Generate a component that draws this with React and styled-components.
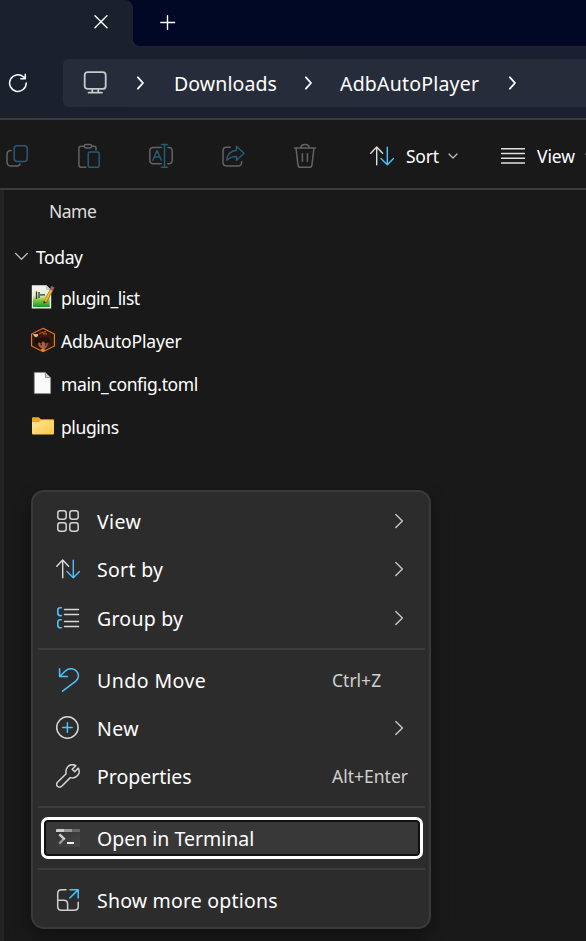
import React from "react";
import styled, { createGlobalStyle } from "styled-components";

const GlobalStyle = createGlobalStyle`
  * { box-sizing: border-box; }
  html, body { margin: 0; background: #191919; overflow: hidden; }
  body { font-family: "Noto Sans", "Open Sans", sans-serif; color: #fff; }
`;

const BLUE = "#4cc2ff";
const DIM = "#636363";
const DIM_BLUE = "#275a75";

const Window = styled.div`
  position: relative;
  display: flex;
  flex-direction: column;
  width: 586px;
  height: 941px;
  overflow: hidden;
  background: #191919;
`;

const TitleBar = styled.div`
  display: flex;
  height: 46px;
  background: #000826;
`;

const Tab = styled.div`
  position: relative;
  width: 133px;
  height: 46px;
  padding: 15px 0 0 94px;
  background: #1b202d;
  border-top-right-radius: 8px;
  &::after {
    content: "";
    position: absolute;
    left: 133px;
    bottom: 0;
    width: 6px;
    height: 6px;
    background: radial-gradient(circle at 100% 0, transparent 5.5px, #1b202d 6px);
  }
`;

const NewTab = styled.div`
  padding: 15px 0 0 27px;
`;

const NavBar = styled.div`
  display: flex;
  align-items: center;
  height: 72px;
  padding: 2px 0 0 8px;
  background: linear-gradient(90deg, #1b202d, #1b1f31);
`;

const AddressBar = styled.div`
  display: flex;
  align-items: center;
  flex: 1;
  height: 48px;
  margin-left: 36px;
  padding-left: 20px;
  background: #272c3a;
  border-radius: 6px 0 0 6px;
`;

const Icon = styled.svg`
  display: block;
  flex: none;
  fill: none;
  stroke: ${(p) => p.$color || "#fff"};
  stroke-width: ${(p) => p.$weight || 1.5};
  stroke-linecap: round;
  stroke-linejoin: round;
`;

const Crumb = styled.div`
  width: ${(p) => p.$width}px;
  padding: 2px 0 0 ${(p) => p.$lead || 29}px;
  font-size: 19.5px;
  line-height: 28px;
  letter-spacing: ${(p) => p.$track || 0}px;
  white-space: nowrap;
`;

const CommandBar = styled.div`
  display: flex;
  align-items: center;
  height: 72px;
  padding: 4px 0 0 5px;
  border-top: 2px solid #3b3b3b;
  border-bottom: 2px solid #3b3b3b;
  background: #191919;
`;

const Actions = styled.div`
  display: flex;
  gap: 48px;
`;

const CommandDivider = styled.div`
  width: 2px;
  height: 48px;
  margin: 0 26px 0 27px;
  background: #2d2d2d;
`;

const Command = styled.div`
  display: flex;
  align-items: center;
  flex: none;
  width: 131px;
`;

const CommandLabel = styled.span`
  width: ${(p) => p.$width}px;
  margin-left: 12px;
  font-size: 17.5px;
  line-height: 26px;
  letter-spacing: ${(p) => p.$track || 0}px;
`;

const Content = styled.div`
  flex: 1;
  border-left: 4px solid #232323;
  font-size: 17.5px;
`;

const ColumnHeader = styled.div`
  height: 45px;
  padding: 8px 0 0 45px;
  line-height: 26px;
  color: #dedede;
  letter-spacing: -0.5px;
`;

const GroupHeader = styled.div`
  display: flex;
  align-items: center;
  gap: 8px;
  height: 42px;
  padding: 1px 0 0 11px;
  letter-spacing: -0.4px;
`;

const FileRow = styled.div`
  display: flex;
  align-items: center;
  gap: 6px;
  height: 43px;
  padding-left: 27px;
`;

const FileName = styled.span`
  padding-bottom: 2px;
  line-height: 26px;
  letter-spacing: ${(p) => p.$track || 0}px;
`;

const Menu = styled.div`
  position: absolute;
  left: 31px;
  top: 490px;
  width: 400px;
  height: 439px;
  padding: 5px 4px 0 5px;
  background: #2c2c2c;
  border: 2px solid #3a3a3a;
  border-radius: 13px;
  box-shadow: 0 8px 18px rgba(0, 0, 0, 0.32);
`;

const MenuRow = styled.div`
  display: flex;
  align-items: center;
  height: ${(p) => p.$height || 48}px;
  padding-left: 18px;
`;

const FocusRow = styled.div`
  display: flex;
  align-items: center;
  width: 382px;
  height: 42px;
  margin: 0 0 9px 3px;
  padding-left: 12px;
  background: #383838;
  border: 3px solid #fff;
  border-radius: 7px;
  box-shadow: inset 0 0 0 2px #111;
`;

const MenuLabel = styled.span`
  flex: 1;
  margin-left: 17px;
  padding-top: ${(p) => p.$drop || 1}px;
  font-size: 19.5px;
  line-height: 28px;
  letter-spacing: ${(p) => p.$track || 0}px;
  white-space: nowrap;
`;

const Shortcut = styled.span`
  width: 93px;
  padding-bottom: 1px;
  font-size: 17.5px;
  color: #cfcfcf;
`;

const Submenu = styled(Icon)`
  margin-right: 21px;
`;

const MenuDivider = styled.div`
  height: 2px;
  margin: ${(p) => p.$top}px 0 ${(p) => p.$bottom}px;
  background: #3b3b3b;
`;

const CrumbChevron = () => (
  <Icon width="8" height="14" viewBox="0 0 8 14" $weight={1.8}><path d="M.9 1.3 6 7 .9 12.7" /></Icon>
);
const DownChevron = () => (
  <Icon width="10" height="8" viewBox="0 0 10 8" $color="#b8b8b8" $weight={1.3}><path d="M1 2 5 6 9 2" /></Icon>
);
const SubChevron = () => (
  <Submenu width="10" height="16" viewBox="0 0 10 16" $color="#c8c8c8" $weight={1.4}><path d="M1.8 1.4 8.4 8 1.8 14.6" /></Submenu>
);
const SortGlyph = () => (
  <Icon width="24" height="24" viewBox="0 0 24 24" $color="#dcdcdc" $weight={1.4}>
    <path d="M6.7 20.7V3.2M.8 9.2 6.7 3.1 12.6 9.2" />
    <path stroke={BLUE} d="M17.3 3.2V20.6M11 14.6 17.3 20.8 23.5 14.6" />
  </Icon>
);

const GridGlyph = () => (
  <Icon width="24" height="24" viewBox="0 0 24 24" $color="#d4d4d4" $weight={1.5}>
    <rect x="1.8" y="1.8" width="8.4" height="8.4" rx="2.4" />
    <rect x="13.8" y="1.8" width="8.4" height="8.4" rx="2.4" />
    <rect x="1.8" y="13.8" width="8.4" height="8.4" rx="2.4" />
    <rect x="13.8" y="13.8" width="8.4" height="8.4" rx="2.4" />
  </Icon>
);
const GroupGlyph = () => (
  <Icon width="24" height="24" viewBox="0 0 24 24" $color="#d8d8d8" $weight={1.4}>
    <path stroke={BLUE} strokeWidth="1.6" d="M5.3 1.7H4.2Q1.8 1.7 1.8 4V7Q1.8 9.6 4.2 9.6H5.3M5.3 13.8H4.2Q1.8 13.8 1.8 16V19.2Q1.8 21.8 4.2 21.8H5.3" />
    <path d="M8.5 3.5H22.5M8.5 8.5H22.5M8.5 15.5H22.5M8.5 20.5H22.5" />
  </Icon>
);
const UndoGlyph = () => (
  <Icon width="24" height="24" viewBox="0 0 24 24" $color={BLUE} $weight={1.5}>
    <path d="M3.6.8V8.5H11.4M3.9 8.2 9 3.3C13.6-1 19.2.6 21.3 4.2C23.3 7.6 22.3 10.8 19.8 13.1L6.6 23.2" />
  </Icon>
);
const NewGlyph = () => (
  <Icon width="24" height="24" viewBox="0 0 24 24" $color="#d8d8d8" $weight={1.5}>
    <circle cx="11.4" cy="11.5" r="10.7" />
    <path stroke={BLUE} d="M6.6 11.5H16.2M11.4 6.7V16.3" />
  </Icon>
);
const WrenchGlyph = () => (
  <Icon width="24" height="24" viewBox="0 0 24 24" $color="#d4d4d4" $weight={1.5}>
    <path d="M19.8 1.6C16.6.1 13.4.7 11.5 3.1C9.8 5.2 9.6 7.2 10.1 9.7L1.5 18.2C.4 19.3.4 21.1 1.5 22.3C2.7 23.5 4.6 23.4 5.7 22.3L14.3 13.6C17 14.4 19.8 13.7 21.6 11.6C23.4 9.5 23.6 6.6 22.3 4.1L18.7 7.7L16.2 5.2Z" />
  </Icon>
);
const TerminalGlyph = () => (
  <Icon width="24" height="24" viewBox="0 0 24 24">
    <defs>
      <linearGradient id="term" x1="0" y1="0" x2="1" y2="1">
        <stop offset="0" stopColor="#303030" /><stop offset="1" stopColor="#484848" />
      </linearGradient>
    </defs>
    <g stroke="none">
      <path fill="url(#term)" d="M0 3H24V20Q24 21 23 21H1Q0 21 0 20Z" />
      <path fill="#ccc" d="M0 6V4Q0 3 1 3H8V6Z" />
      <path fill="#999" d="M8 3H16V6H8Z" />
      <path fill="#666" d="M16 3H23Q24 3 24 4V6H16Z" />
      <path fill="#f4f4f4" d="M11 16H18V18H11Z" />
    </g>
    <path stroke="#999" strokeWidth="2.4" strokeLinecap="butt" d="M8.4 12.2 3.3 17.6" />
    <path stroke="#d2d2d2" strokeWidth="2.4" strokeLinecap="butt" d="M3.3 8.3 8.8 13.4" />
  </Icon>
);
const MoreGlyph = () => (
  <Icon width="24" height="24" viewBox="0 0 24 24" $color="#cfcfcf" $weight={1.5}>
    <path d="M10 1.7H5.5Q1.7 1.7 1.7 5.5V18.5Q1.7 22.3 5.5 22.3H18Q22.2 22.3 22.2 18.5V14.2M1.7 12.3H7.8Q11.6 12.3 11.6 16V22.3" />
    <path stroke={BLUE} d="M14 1.7H22.2V10M13.8 10 22 1.9" />
  </Icon>
);

const ToolbarGlyph = ({ children }) => (
  <Icon width="24" height="28" viewBox="0 -0.8 24 28" $color={DIM} $weight={1.5}>{children}</Icon>
);

const actions = [
  <ToolbarGlyph key="copy">
    <rect x="9.2" y="3" width="13" height="15.8" rx="3" stroke={DIM_BLUE} />
    <path d="M6.2 7.7Q2 7.7 2 11.5V18.6Q2 23.3 6.5 23.3H11Q14.5 23.3 14.9 21.3" />
  </ToolbarGlyph>,
  <ToolbarGlyph key="paste">
    <path d="M7.3 3.4H4Q1.9 3.4 1.9 5.5V22.3Q1.9 24.5 4 24.5H8.8M14.7 3.4H17Q19 3.4 19 5.5V7.2" />
    <rect x="7.3" y="1.7" width="7.4" height="3.4" rx="1.7" />
    <rect x="11.2" y="9.3" width="11" height="15.2" rx="1.8" stroke={DIM_BLUE} />
  </ToolbarGlyph>,
  <ToolbarGlyph key="rename">
    <path d="M12.2 4.6H4.5Q.8 4.6 .8 8.2V17.3Q.8 21 4.5 21H12.2M18.8 4.6H19.7Q23.2 4.6 23.2 8.2V17.3Q23.2 21 19.7 21H18.8" />
    <path stroke={DIM_BLUE} d="M4 17.4 7.8 7.9H8.3L12.2 17.4M5.2 14.3H11M12.5 1.7H18.5M12.5 24.4H18.5M15.5 1.7V24.4" />
  </ToolbarGlyph>,
  <ToolbarGlyph key="share">
    <path d="M9.3 4.4H5.5Q2 4.4 2 8V19.4Q2 23.3 6 23.3H17Q20.5 23.3 20.8 18.7" />
    <path stroke={DIM_BLUE} d="M15.5 3.5 23 10.5 15.5 17.5V13.7C10.8 13.6 8.4 15 5.7 17.3C6.4 11.7 9.5 8.1 15.5 7.4Z" />
  </ToolbarGlyph>,
  <ToolbarGlyph key="delete">
    <path d="M1.4 5.3H22.6M7.8 5.3Q8 1.8 12 1.8T16.2 5.3M3 5.3 5 22.3Q5.3 24.5 7.5 24.5H16.4Q18.6 24.5 18.9 22.3L21 5.3M9.4 11V18.5M14.4 11V18.5" />
  </ToolbarGlyph>,
];

const FileGlyph = styled.svg`
  display: block;
  flex: none;
  margin-top: -3px;
`;

const ListFile = () => (
  <FileGlyph width="24" height="24" viewBox="0 0 24 24">
    <defs>
      <linearGradient id="list" x1="0" y1="0" x2="0" y2="1">
        <stop offset="0" stopColor="#f3f6ee" /><stop offset=".42" stopColor="#e3edcf" />
        <stop offset=".65" stopColor="#88cc40" /><stop offset="1" stopColor="#16952a" />
      </linearGradient>
    </defs>
    <path fill="#f2f2ed" d="M.8.3H15.5L20.2 5V23.5H.8Z" />
    <path fill="url(#list)" d="M2 1.5H15L18.7 6V22H2Z" />
    <path fill="none" stroke="#34362e" strokeWidth="1.3" d="M5.5 6.5V14M8 7V13M9 9.8H14" />
    <path fill="#c5cbc7" d="M15 .4V5H20Z" />
    <path fill="none" stroke="#9b6d18" strokeWidth="3.4" d="M14 17.3 20.5 5" />
    <path fill="none" stroke="#f4b52b" strokeWidth="2.2" d="M14 16.7 20.5 5" />
    <path fill="none" stroke="#a45d64" strokeWidth="3.4" d="M20.3 5.2 22 1.7" />
    <path fill="#403521" d="M12.6 15.7 12.5 18.8 15.3 17.5Z" />
  </FileGlyph>
);
const AppFile = () => (
  <FileGlyph width="24" height="26" viewBox="0 0 24 26">
    <path fill="#24150f" stroke="#ec7b18" strokeWidth="1.2" d="M12 1.3 23.4 7V19L12 24.7 .6 19V7Z" />
    <path fill="#3c1e15" d="M5 7 9 4 14 5 20 7 21 15 18 21 8 20 2 13Z" />
    <path fill="#a55f47" d="M7 16 10 14 16 15 17 17 15 21 12 22.5 8 19.5Z" />
    <path fill="#210f0b" d="M3 11 7 9 10 11 14 8 19 11 20 16 17 15 15 17 12 14 10 17 8 15 5 18Z" />
    <path fill="#39180f" d="M8 6 18 7 20 11 12 10 7 12Z" />
    <path fill="#e5b589" d="M2 7H7V9L5 10.5 3 9Z" />
    <path fill="none" stroke="#b85b1e" strokeWidth="1.2" d="M8 6.5 15 4.5M12 6.8H16" />
    <path fill="#46150f" d="M9.5 17H11V18.2H9.5ZM14 17.3H15.5V18.5H14Z" />
    <path fill="#e78a28" d="M9.5 22.7 12 21.5 14.5 22.7 12 25Z" />
  </FileGlyph>
);
const BlankFile = () => (
  <FileGlyph width="24" height="24" viewBox="0 0 24 24">
    <path fill="#fafafa" stroke="#8b8b8b" strokeWidth=".8" d="M3.3 1.4H14.4L19.6 6.6V22.6H3.3Z" />
    <path fill="#d0d0d0" stroke="#777" strokeWidth=".8" d="M14.4 1.4V6.6H19.6Z" />
  </FileGlyph>
);
const Folder = () => (
  <FileGlyph width="24" height="24" viewBox="0 0 24 24">
    <defs>
      <linearGradient id="folder" x1="0" y1="0" x2="1" y2="1">
        <stop offset="0" stopColor="#ffe59a" /><stop offset="1" stopColor="#ffc842" />
      </linearGradient>
    </defs>
    <path fill="#efaa18" d="M1 6V4.3Q1 3.3 2 3.3H7.8L10 5.3H22Q23 5.3 23 6.3V10H1Z" />
    <path fill="url(#folder)" d="M1 8H8L10 6.2H23V19.5Q23 20.5 22 20.5H2Q1 20.5 1 19.5Z" />
  </FileGlyph>
);

const files = [
  { name: "plugin_list", track: -0.45, glyph: <ListFile /> },
  { name: "AdbAutoPlayer", track: -0.15, glyph: <AppFile /> },
  { name: "main_config.toml", track: -0.37, glyph: <BlankFile /> },
  { name: "plugins", track: -0.4, glyph: <Folder /> },
];

const MenuItem = ({ glyph, label, track, drop, shortcut, submenu, height }) => (
  <MenuRow $height={height}>
    {glyph}
    <MenuLabel $track={track} $drop={drop}>{label}</MenuLabel>
    {shortcut && <Shortcut>{shortcut}</Shortcut>}
    {submenu && <SubChevron />}
  </MenuRow>
);

export default function App() {
  return (
    <Window>
      <GlobalStyle />
      <TitleBar>
        <Tab>
          <Icon width="14" height="14" viewBox="0 0 14 14" $weight={1.4}><path d="M1 .8 13 12.8M13 .8 1 12.8" /></Icon>
        </Tab>
        <NewTab>
          <Icon width="16" height="16" viewBox="0 0 16 16" $weight={1.4}><path d="M.8 7.5H14.6M7.5.8V14.4" /></Icon>
        </NewTab>
      </TitleBar>
      <NavBar>
        <Icon width="19" height="20" viewBox="0 0 19 20" $weight={1.5}>
          <path d="M18.2 9.9A8.3 8.3 0 1 1 15.3 3.8L17.3 5.6M17.3 1.3V5.8H12.8" />
        </Icon>
        <AddressBar>
          <Icon width="24" height="24" viewBox="0 0 24 24" $color="#c9c9cc" $weight={1.8}>
            <rect x="1.7" y="1.1" width="21" height="16.8" rx="3" />
            <path d="M9.3 18.5V21.5M15.3 18.5V21.5M5.5 21.6H19" />
          </Icon>
          <Crumb $width={30} /><CrumbChevron />
          <Crumb $width={160} $track={0.1}>Downloads</Crumb><CrumbChevron />
          <Crumb $width={196} $lead={27} $track={0.2}>AdbAutoPlayer</Crumb><CrumbChevron />
        </AddressBar>
      </NavBar>
      <CommandBar>
        <Actions>{actions}</Actions>
        <CommandDivider />
        <Command>
          <SortGlyph />
          <CommandLabel $width={42} $track={-0.25}>Sort</CommandLabel>
          <DownChevron />
        </Command>
        <Command>
          <Icon width="24" height="24" viewBox="0 0 24 24" $weight={1.5} $color="#e0e0e0">
            <path d="M.5 4.7H23.5M.5 9.5H23.5M.5 14.3H23.5M.5 19.1H23.5" />
          </Icon>
          <CommandLabel $width={48} $track={-0.1}>View</CommandLabel>
          <DownChevron />
        </Command>
      </CommandBar>
      <Content>
        <ColumnHeader>Name</ColumnHeader>
        <GroupHeader>
          <Icon width="13" height="10" viewBox="0 0 13 10" $color="#bdbdbd" $weight={1.3}><path d="M.7 1.5 6.5 7.3 12.3 1.5" /></Icon>
          Today
        </GroupHeader>
        {files.map((f) => (
          <FileRow key={f.name}>{f.glyph}<FileName $track={f.track}>{f.name}</FileName></FileRow>
        ))}
      </Content>
      <Menu>
        <MenuItem glyph={<GridGlyph />} label="View" track={0.4} submenu />
        <MenuItem glyph={<SortGlyph />} label="Sort by" track={0.3} submenu />
        <MenuItem glyph={<GroupGlyph />} label="Group by" track={0.25} drop={2} submenu height={49} />
        <MenuDivider $top={6} $bottom={6} />
        <MenuItem glyph={<UndoGlyph />} label="Undo Move" track={0.45} shortcut="Ctrl+Z" />
        <MenuItem glyph={<NewGlyph />} label="New" track={0.4} submenu />
        <MenuItem glyph={<WrenchGlyph />} label="Properties" shortcut="Alt+Enter" />
        <MenuDivider $top={6} $bottom={9} />
        <FocusRow>
          <TerminalGlyph />
          <MenuLabel>Open in Terminal</MenuLabel>
        </FocusRow>
        <MenuDivider $top={0} $bottom={6} />
        <MenuItem glyph={<MoreGlyph />} label="Show more options" track={0.2} />
      </Menu>
    </Window>
  );
}
